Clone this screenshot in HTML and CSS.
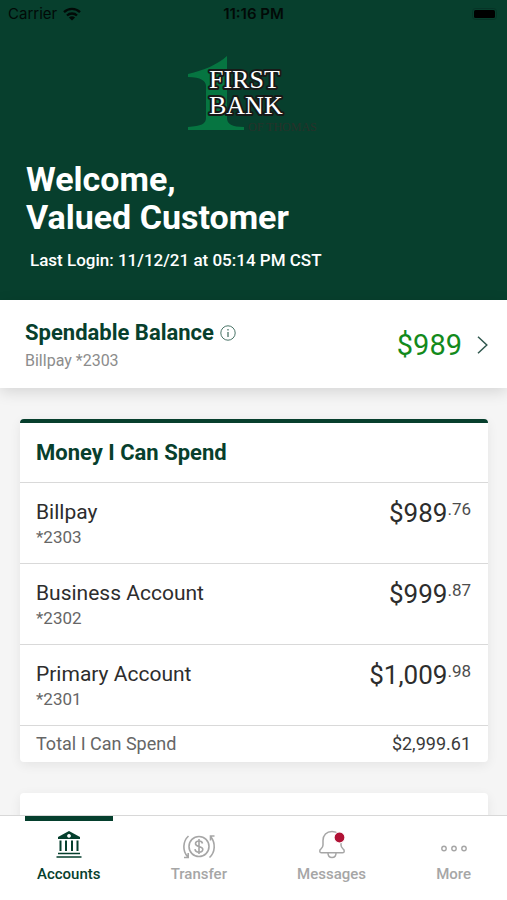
FILE: index.html
```html
<!DOCTYPE html>
<html lang="en">
<head>
<meta charset="utf-8">
<meta name="viewport" content="width=device-width, initial-scale=1">
<title>First Bank – Accounts</title>
<link rel="stylesheet" href="styles.css">
</head>
<body>
<header class="hero">
  <div class="status">
    <span class="carrier">Carrier
      <svg width="18" height="14" viewBox="0 0 18 14" aria-hidden="true"><g fill="none" stroke="#020a07" stroke-width="2.3"><path d="M1 5.200a11.500 11.500 0 0 1 16 0"/><path d="M4 8.500a7.200 7.200 0 0 1 10 0"/></g><path d="M9 13.500L5.900 10.600a4.500 4.500 0 0 1 6.200 0z" fill="#020a07"/></svg>
    </span>
    <span class="time">11:16 PM</span>
    <span class="battery"><svg width="27" height="12" viewBox="0 0 27 12" aria-hidden="true"><rect x=".5" y=".5" width="24" height="11" rx="3" fill="none" stroke="#063427"/><rect x="2" y="2" width="21" height="8" rx="1.500" fill="#000"/></svg></span>
  </div>
  <svg class="logo" width="136" height="78" viewBox="0 0 136 78" role="img" aria-label="First Bank of Thomas">
    <path d="M2 18C18 14 31 9 41 0V62c0 6 5 9 17 9v3H2v-3c13-1 18-3 18-9V30c0-5-5-9-18-9z" fill="#067541"/>
    <text class="logo-name"><tspan x="23" y="32">FIRST</tspan><tspan x="23" y="58">BANK</tspan></text>
    <text class="logo-place" x="62" y="75">OF THOMAS</text>
  </svg>
  <h1>Welcome,<br>Valued Customer</h1>
  <p class="login">Last Login: 11/12/21 at 05:14 PM CST</p>
</header>
<main>
  <a class="balance" href="#balance">
    <span class="balance-info">
      <span class="balance-title">Spendable Balance
        <svg width="16" height="16" viewBox="0 0 16 16" fill="none" stroke="#4b7568" aria-hidden="true"><circle cx="8" cy="8" r="7.200"/><path d="M8 7v5M8 4v1.500" stroke-width="1.300"/></svg>
      </span>
      <span class="balance-sub">Billpay *2303</span>
    </span>
    <span class="balance-amount">$989</span>
    <svg width="11" height="18" viewBox="0 0 11 18" fill="none" stroke="#31584f" stroke-width="1.500" aria-hidden="true"><path d="M1 .8L9.800 9 1 17.200"/></svg>
  </a>
  <section class="card card-main">
    <h2>Money I Can Spend</h2>
    <ul>
      <li><div><span class="name">Billpay</span><span class="number">*2303</span></div><span class="amount">$989<small>.76</small></span></li>
      <li><div><span class="name">Business Account</span><span class="number">*2302</span></div><span class="amount">$999<small>.87</small></span></li>
      <li><div><span class="name">Primary Account</span><span class="number">*2301</span></div><span class="amount">$1,009<small>.98</small></span></li>
    </ul>
    <div class="total"><span>Total I Can Spend</span><span class="total-amount">$2,999.61</span></div>
  </section>
  <section class="card card-next"></section>
</main>
<nav>
  <a class="tab active" href="#accounts">
    <svg width="28" height="30" viewBox="0 0 28 30" aria-hidden="true"><path fill="#053f2d" fill-rule="evenodd" d="M14 1L25 7v2H3V7zM14 4a1.900 1.900 0 1 0 .01 0z"/><path d="M5.500 10.500V21M11 10.500V21M17 10.500V21M22.500 10.500V21" stroke="#053f2d" stroke-width="2"/><path d="M3 23.500H25M1.500 27H26.500" stroke="#053f2d" stroke-width="1.600"/></svg>
    Accounts
  </a>
  <a class="tab" href="#transfer">
    <svg width="34" height="30" viewBox="0 0 34 30" fill="none" stroke="#a6a6a6" stroke-width="1.600" aria-hidden="true"><circle cx="17" cy="16.500" r="10"/><path d="M20.500 13.500c-.3-1.800-1.700-2.500-3.500-2.500-2 0-3.500 1-3.500 2.700 0 3.700 7.300 1.800 7.300 5.600 0 1.700-1.700 2.800-3.800 2.800s-3.800-1-4-3M17 9v15"/><path d="M6.500 6C.5 11.500.5 21 5.500 26.500M2 27.500H6.200v-4.500M27.500 27.500c6-5.500 6-14.500 1.500-20.500M32.500 6H28.500V10.500"/></svg>
    Transfer
  </a>
  <a class="tab" href="#messages">
    <svg width="28" height="30" viewBox="0 0 28 30" fill="none" stroke="#a6a6a6" stroke-width="1.500" aria-hidden="true"><path d="M14 1.500C8.500 1.500 5 5.300 5 10.500V15c0 2-.7 2.800-2 3.800-1.700 1-1.700 4 .4 4H24.600c2.100 0 2.100-3 .4-4-1.300-1-2-1.800-2-3.800V10.500C23 5.300 19.500 1.500 14 1.500z"/><path d="M10 23c0 6 8 6 8 0"/><circle cx="21.500" cy="7.500" r="5.500" fill="#b01235" stroke="#fff" stroke-width="1.200"/></svg>
    Messages
  </a>
  <a class="tab" href="#more">
    <svg width="28" height="30" viewBox="0 0 28 30" fill="none" stroke="#a6a6a6" stroke-width="1.400" aria-hidden="true"><circle cx="4" cy="18.500" r="2.200"/><circle cx="14" cy="18.500" r="2.200"/><circle cx="24" cy="18.500" r="2.200"/></svg>
    More
  </a>
</nav>
</body>
</html>
```
FILE: styles.css
```css
* { box-sizing: border-box; }
body {
  margin: 0;
  height: 100vh;
  display: flex;
  flex-direction: column;
  overflow: hidden;
  background: #f5f5f5;
  font-family: Roboto, sans-serif;
  color: #2d2d2d;
}
h1, h2, p, ul { margin: 0; padding: 0; }
a { color: inherit; text-decoration: none; }
svg { flex: none; }

.hero {
  flex: none;
  background: #073f2d;
  color: #fff;
  padding-bottom: 30px;
}
.status {
  display: grid;
  grid-template-columns: 1fr auto 1fr;
  align-items: center;
  height: 28px;
  padding: 0 8px;
  font: 15px/20px Inter, sans-serif;
  color: #020a07;
}
.carrier { display: flex; align-items: center; gap: 6px; }
.time { font-weight: 600; }
.battery { display: flex; justify-content: flex-end; }
.logo {
  display: block;
  margin: 28px auto 0;
  font-family: "Liberation Serif", serif;
}
.logo-name {
  font-size: 26px;
  fill: #fff;
  stroke: #171a18;
  stroke-width: 4px;
  stroke-linejoin: round;
  paint-order: stroke;
}
.logo-place { font-size: 12px; fill: #28312a; }
.hero h1 {
  margin-top: 26px;
  padding: 0 26px;
  font-size: 34px;
  line-height: 38px;
  font-weight: 700;
}
.login {
  margin-top: 14px;
  padding: 0 30px;
  font-size: 17px;
  line-height: 20px;
  font-weight: 500;
}

main { flex: 1; min-height: 0; }
.balance {
  display: flex;
  align-items: center;
  height: 88px;
  padding: 1px 19px 0 25px;
  background: #fff;
  box-shadow: 0 4px 14px rgba(0, 0, 0, .13);
}
.balance-info { flex: 1; display: flex; flex-direction: column; gap: 4px; }
.balance-title {
  display: flex;
  align-items: center;
  gap: 6px;
  font-size: 22px;
  line-height: 28px;
  font-weight: 700;
  color: #073f2d;
}
.balance-sub { font-size: 16px; line-height: 20px; color: #8c8c8c; }
.balance-amount { margin-right: 15px; font-size: 29px; color: #138a1b; }

.card {
  margin: 31px 19px 0 20px;
  background: #fff;
  border-radius: 4px;
  box-shadow: 0 3px 12px rgba(0, 0, 0, .07);
}
.card-main { border-top: 4px solid #073f2d; }
.card h2 {
  padding: 16px 16px 15px;
  font-size: 22px;
  line-height: 28px;
  color: #073f2d;
}
.card ul { list-style: none; }
.card li {
  display: flex;
  justify-content: space-between;
  height: 81px;
  padding: 16px 17px 16px 16px;
  border-top: 1px solid #d9d9d9;
}
.name, .number { display: block; }
.name { font-size: 21px; line-height: 26px; }
.number { font-size: 17px; line-height: 24px; color: #666; }
.amount { font-size: 26px; line-height: 28px; }
.amount small { font-size: 17px; line-height: 17px; vertical-align: 7px; color: #4d4d4d; }
.total {
  display: flex;
  justify-content: space-between;
  border-top: 1px solid #d9d9d9;
  padding: 6px 17px 6px 16px;
  font-size: 18px;
  line-height: 24px;
  color: #666;
}
.total-amount { color: #3a3a3a; }
.card-next { height: 100px; }

nav {
  flex: none;
  display: flex;
  justify-content: space-between;
  height: 85px;
  padding: 0 24px 0 25px;
  background: #fff;
  border-top: 1px solid #d8d8d8;
}
.tab {
  display: flex;
  flex-direction: column;
  align-items: center;
  gap: 5px;
  padding: 9px 12px 0;
  border-top: 5px solid transparent;
  font-size: 15px;
  line-height: 18px;
  font-weight: 500;
  color: #a6a6a6;
}
.active { border-color: #053f2d; color: #073f2d; }
```
